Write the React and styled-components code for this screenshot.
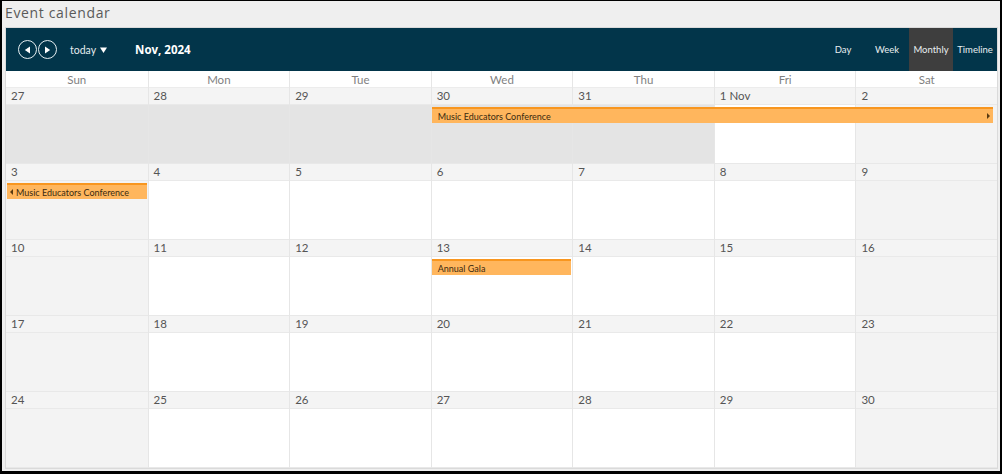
import React from "react";
import styled, { createGlobalStyle } from "styled-components";

const Global = createGlobalStyle`
  html, body { margin: 0; padding: 0; }
  body { font-family: "Lato", "Open Sans", sans-serif; }
  * { box-sizing: border-box; }
`;

const Frame = styled.div`
  width: 1002px;
  height: 474px;
  background: #efefef;
  border-style: solid;
  border-color: #000;
  border-width: 1px 2px 3px 2px;
  padding: 0 0 0 3px;
  overflow: hidden;
`;

const Title = styled.div`
  font-family: "Open Sans", sans-serif;
  font-size: 14px;
  letter-spacing: 0.65px;
  color: #5a5a5a;
  height: 26px;
  line-height: 23px;
  padding-left: 0;
`;

const Calendar = styled.div`
  width: 993px;
  border: 1px solid #dadada;
  background: #fff;
`;

const Toolbar = styled.div`
  height: 43px;
  background: #02354a;
  display: flex;
  align-items: stretch;
`;

const NavGroup = styled.div`
  display: flex;
  align-items: center;
  padding-left: 12px;
  gap: 1px;
`;

const RoundBtn = styled.div`
  width: 19px;
  height: 19px;
  border: 1px solid #e6eef1;
  border-radius: 50%;
  display: flex;
  align-items: center;
  justify-content: center;
`;

const Today = styled.div`
  display: flex;
  align-items: center;
  gap: 4px;
  margin-left: 13px;
  color: #e4ecef;
  font-family: "Lato", sans-serif;
  font-size: 10.5px;
`;

const MonthTitle = styled.div`
  display: flex;
  align-items: center;
  margin-left: 28px;
  color: #fff;
  font-family: "Open Sans", sans-serif;
  font-weight: 700;
  font-size: 11.5px;
`;

const Spacer = styled.div`
  flex: 1;
`;

const ViewBtn = styled.div`
  width: 44px;
  display: flex;
  align-items: center;
  justify-content: center;
  font-size: 9.5px;
  font-family: "Lato", sans-serif;
  color: #e8eef0;
  background: ${(p) => (p.$active ? "#3e3e3e" : "transparent")};
`;

const DayHead = styled.div`
  display: grid;
  grid-template-columns: repeat(7, 1fr);
  height: 17px;
  border-bottom: 1px solid #ececec;
`;

const DayName = styled.div`
  text-align: center;
  font-size: 11.5px;
  line-height: 18px;
  color: #7f7f7f;
  border-left: ${(p) => (p.$first ? "none" : "1px solid #e6e6e6")};
`;

const Week = styled.div`
  display: grid;
  grid-template-columns: repeat(7, 1fr);
  grid-template-rows: 17px 59px;
`;

const Cell = styled.div`
  grid-row: 1 / span 2;
  grid-column: ${(p) => p.$col};
  display: flex;
  flex-direction: column;
  border-left: ${(p) => (p.$col === 1 ? "none" : "1px solid #e6e6e6")};
`;

const DateLabel = styled.div`
  height: 17px;
  background: #f4f4f4;
  border-bottom: 1px solid #e9e9e9;
  font-size: 11.5px;
  line-height: 16px;
  color: #555;
  padding-left: 5px;
`;

const CellBody = styled.div`
  flex: 1;
  background: ${(p) =>
    p.$kind === "other" ? "#e4e4e4" : p.$kind === "weekend" ? "#f3f3f3" : "#fff"};
  border-bottom: 1px solid #e8e8e8;
`;

const EventBar = styled.div`
  grid-row: 2;
  grid-column: ${(p) => p.$start} / span ${(p) => p.$span};
  align-self: start;
  margin: 2px ${(p) => p.$mr || 1}px 0 1px;
  height: 16px;
  background: #ffb65d;
  border-top: 2px solid #f8961f;
  display: flex;
  align-items: center;
  padding-left: ${(p) => (p.$leftArrow ? 3 : 6)}px;
  padding-right: 3px;
  font-size: 9px;
  color: #3a2a10;
  z-index: 1;
  position: relative;
`;

const EventText = styled.span`
  flex: 1;
  white-space: nowrap;
  line-height: 13px;
`;

const Arrow = ({ dir }) => (
  <svg width="3" height="6" viewBox="0 0 3 6" style={{ marginRight: dir === "left" ? 3 : 0 }}>
    {dir === "left" ? <path d="M3 0 L0 3 L3 6 Z" fill="#5a3a10" /> : <path d="M0 0 L3 3 L0 6 Z" fill="#5a3a10" />}
  </svg>
);

const Tri = ({ dir }) => (
  <svg width="7" height="8" viewBox="0 0 7 8">
    {dir === "left" ? <path d="M6 0.5 L0.8 4 L6 7.5 Z" fill="#fff" /> : <path d="M1 0.5 L6.2 4 L1 7.5 Z" fill="#fff" />}
  </svg>
);

const days = ["Sun", "Mon", "Tue", "Wed", "Thu", "Fri", "Sat"];

const weeks = [
  {
    dates: ["27", "28", "29", "30", "31", "1 Nov", "2"],
    other: [true, true, true, true, true, false, false],
    events: [{ start: 4, span: 4, text: "Music Educators Conference", right: true, mr: 4 }],
  },
  {
    dates: ["3", "4", "5", "6", "7", "8", "9"],
    events: [{ start: 1, span: 1, text: "Music Educators Conference", left: true }],
  },
  {
    dates: ["10", "11", "12", "13", "14", "15", "16"],
    events: [{ start: 4, span: 1, text: "Annual Gala" }],
  },
  { dates: ["17", "18", "19", "20", "21", "22", "23"], events: [] },
  { dates: ["24", "25", "26", "27", "28", "29", "30"], events: [] },
];

export default function App() {
  return (
    <>
      <Global />
      <Frame>
        <Title>Event calendar</Title>
        <Calendar>
          <Toolbar>
            <NavGroup>
              <RoundBtn>
                <Tri dir="left" />
              </RoundBtn>
              <RoundBtn>
                <Tri dir="right" />
              </RoundBtn>
            </NavGroup>
            <Today>
              today
              <svg width="7" height="6" viewBox="0 0 7 6">
                <path d="M0 0.5 L7 0.5 L3.5 6 Z" fill="#fff" />
              </svg>
            </Today>
            <MonthTitle>Nov, 2024</MonthTitle>
            <Spacer />
            <ViewBtn>Day</ViewBtn>
            <ViewBtn>Week</ViewBtn>
            <ViewBtn $active>Monthly</ViewBtn>
            <ViewBtn>Timeline</ViewBtn>
          </Toolbar>
          <DayHead>
            {days.map((d, i) => (
              <DayName key={d} $first={i === 0}>
                {d}
              </DayName>
            ))}
          </DayHead>
          {weeks.map((w, wi) => (
            <Week key={wi}>
              {w.dates.map((d, i) => {
                const kind = w.other && w.other[i] ? "other" : i === 0 || i === 6 ? "weekend" : "day";
                return (
                  <Cell key={i} $col={i + 1}>
                    <DateLabel>{d}</DateLabel>
                    <CellBody $kind={kind} />
                  </Cell>
                );
              })}
              {w.events.map((e, ei) => (
                <EventBar key={ei} $start={e.start} $span={e.span} $mr={e.mr} $leftArrow={e.left}>
                  {e.left && <Arrow dir="left" />}
                  <EventText>{e.text}</EventText>
                  {e.right && <Arrow dir="right" />}
                </EventBar>
              ))}
            </Week>
          ))}
        </Calendar>
      </Frame>
    </>
  );
}
